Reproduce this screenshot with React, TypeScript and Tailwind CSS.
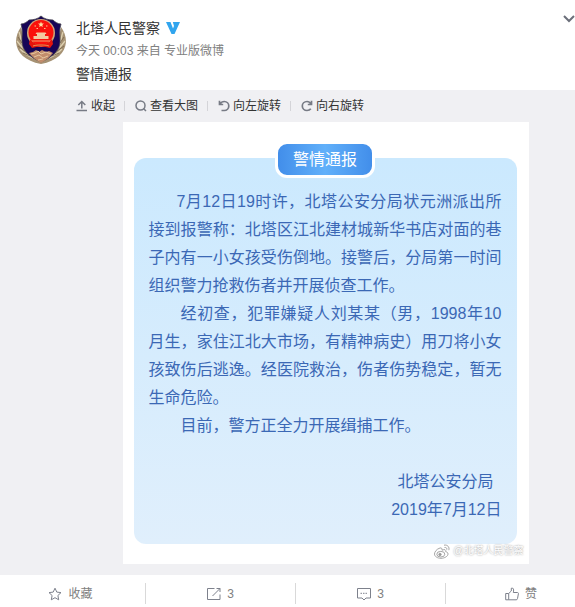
import type { ReactNode } from "react";

function Emblem() {
  return (
    <svg viewBox="0 0 50 50" className="size-[50px] shrink-0" role="img" aria-label="北塔人民警察">
      <path d="M5 12C2 16 0 21 0 27c1 11 9 19 25 22 16-3 24-11 25-22 0-6-2-11-5-15l-4 21-16 10L9 33Z" fill="#a69274" />
      <path d="M3 17c2 5 2 10 4 15M1 26c3 4 6 8 10 11M4 34c4 4 8 7 13 9M47 17c-2 5-2 10-4 15M49 26c-3 4-6 8-10 11M46 34c-4 4-8 7-13 9" fill="none" stroke="#ddd0b0" strokeWidth="1.3" />
      <path d="M2 22l4 6M2 31l7 5M7 38l7 3M48 22l-4 6M48 31l-7 5M43 38l-7 3" fill="none" stroke="#79644a" strokeWidth="0.8" />
      <path d="M25 1c3 3 8 4 12 4 2 2 5 4 8 4-2 6-1 11-1 17 0 9-6 15-19 21C12 41 6 35 6 26c0-6 1-11-1-17 3 0 6-2 8-4 4 0 9-1 12-4Z" fill="#170557" stroke="#3d3a48" strokeWidth="0.8" />
      <path d="M13 38l4-1 3-2 3 2 3-2 4 2 3-1 4 2c-3 4-7 7-12 10-5-3-9-6-12-10Z" fill="#c28d6c" />
      <path d="M15 39l4-1 3-2 3 3 5-2 5 2M18 42l5-2 4 3 5-2M22 45l5-1" fill="none" stroke="#e6c7a0" strokeWidth="1" />
      <circle cx="25" cy="18" r="14" fill="#cfa779" />
      <circle cx="25" cy="17.500" r="12.500" fill="#fa100b" />
      <path d="M14 24c3 4 6 5 11 5s8-1 11-5l1 5-3 4c-6-2-12-2-18 0l-3-4Z" fill="#e5140c" />
      <path d="M17 31c3-1 5-1 8-1s5 0 8 1" fill="none" stroke="#e29355" strokeWidth="1" />
      <path d="m25 6.500 .8 2 2.100.1-1.600 1.400.5 2-1.800-1.100-1.800 1.100.5-2L22.100 8.600l2.100-.1Z" fill="#ffe0a0" />
      <path d="M18.500 11H20M30 11h1.500M20.500 13.500H22M28 13.500h1.500" stroke="#ffc08c" strokeWidth="1.2" />
      <path d="M20.500 17.500h9l1 1.500h-11ZM21 19h8v2h-8ZM17.500 21h15v3h-15Z" fill="#f3c9a0" />
      <path d="M16 26h18" stroke="#efa573" strokeWidth="1" />
    </svg>
  );
}

function Icon({ children }: { children: ReactNode }) {
  return (
    <svg
      viewBox="0 0 12 12"
      className="size-3 shrink-0 text-[#777b85]"
      fill="none"
      stroke="currentColor"
      strokeWidth="1.5"
      aria-hidden="true"
    >
      {children}
    </svg>
  );
}

const tools = [
  { label: "收起", icon: <path d="M.5 10.500h10.500M5.800 8.500V1.500M2.300 5l3.500-3.500L9.300 5" /> },
  {
    label: "查看大图",
    icon: (
      <>
        <circle cx="5.500" cy="5.500" r="4.500" />
        <path d="m8.500 8.500 2.500 2.500" />
      </>
    ),
  },
  {
    label: "向左旋转",
    icon: <path strokeWidth="1.700" d="M1.500.8v3.700h3.700M1.800 4.300C3 2.300 4.500 1.500 6.300 1.500c2.500 0 4.500 2 4.500 4.500s-2 4.500-4.500 4.500H3.500" />,
  },
  {
    label: "向右旋转",
    icon: <path strokeWidth="1.700" d="M10.500.8v3.700H6.800M10.200 4.300C9 2.300 7.700 1.500 6 1.500 3.300 1.500 1.300 3.500 1.300 6s2 4.500 4.700 4.500c1.700 0 3-.7 3.800-1.800" />,
  },
];

const actions = [
  {
    label: "收藏",
    icon: <path d="m7 1.200 1.800 3.900 4.200.5-3.100 2.900.8 4.300L7 10.700l-3.700 2.100.8-4.300L1 5.600l4.200-.5Z" />,
  },
  { label: "3", name: "转发", icon: <path d="M7.500 1.500h-7v11h12.500V7.500M5.500 9 13 1.500M9.500 1.500H13V5" /> },
  {
    label: "3",
    name: "评论",
    icon: (
      <>
        <path d="M.5 1.500h13v9.500H9l-2 2-2-2H.5Z" />
        <path d="M3.500 6.300h7" strokeDasharray="1.500 1" />
      </>
    ),
  },
  {
    label: "赞",
    icon: <path d="M.7 6.500h3v6.300h-3ZM3.700 6.500 6.300 4V1.200h1.500c1 .8 1 2.300.5 4.300h4.200c.8 0 1 .6.900 1.300l-.9 4.800c-.2.800-.6 1.200-1.300 1.200H3.700" />,
  },
];

export default function App() {
  return (
    <main className="overflow-hidden bg-white font-['Liberation_Sans','Noto_Sans_CJK_SC',sans-serif] text-[#333]">
      <header className="flex gap-[10px] pt-[15px] pl-4">
        <Emblem />
        <div className="h-[75px] flex-1 pt-[2px]">
          <div className="flex items-center gap-[6px]">
            <a href="#profile" className="text-sm leading-[22px]">北塔人民警察</a>
            <svg viewBox="0 0 14 12" className="h-3 w-[14px]" role="img" aria-label="认证">
              <path d="M0 0h4.500L7 6.500 8 4 6.800 0H14L8.500 12h-3Z" fill="#31a5ee" />
            </svg>
          </div>
          <p className="text-xs leading-6 text-[#808080]">
            <a href="#time">今天 00:03</a> 来自 <a href="#source">专业版微博</a>
          </p>
          <p className="text-sm leading-[22px]">警情通报</p>
        </div>
        <button type="button" aria-label="更多" className="self-start">
          <svg viewBox="0 0 12 8" className="h-2 w-3" fill="none" stroke="#6b6f7a" strokeWidth="2" aria-hidden="true">
            <path d="m1 1 5 5 5-5" />
          </svg>
        </button>
      </header>

      <section className="bg-[#f0f0f3] pb-[11px] pl-[76px]">
        <div className="flex h-8 items-center">
          {tools.map((tool, i) => (
            <div key={tool.label} className="flex items-center">
              {i > 0 && <span className="mr-[10px] ml-[9px] h-[10px] w-px bg-[#d4d4d8]" />}
              <button type="button" className="flex items-center gap-[3px] text-xs leading-4 whitespace-nowrap">
                <Icon>{tool.icon}</Icon>
                {tool.label}
              </button>
            </div>
          ))}
        </div>

        <article className="relative mx-auto max-w-[406px] bg-white pt-9 pr-3 pb-5 pl-[11px]">
          <div className="rounded-xl bg-linear-to-b from-[#cbe9fe] to-[#e0effc] px-[15px] pb-5 text-base leading-7 text-[#3b68b5]">
            <div className="flex justify-center">
              <h1 className="-mt-[17px] rounded-xl border-3 border-white bg-linear-to-r from-[#428eea] via-[#61b0fa] to-[#428eea] px-[15px] text-base leading-[31px] text-white">
                警情通报
              </h1>
            </div>
            <div className="pt-[10px] text-justify">
              <p className="indent-7">
                7月12日19时许，北塔公安分局状元洲派出所接到报警称：北塔区江北建材城新华书店对面的巷子内有一小女孩受伤倒地。接警后，分局第一时间组织警力抢救伤者并开展侦查工作。
              </p>
              <p className="indent-8">
                经初查，犯罪嫌疑人刘某某（男，1998年10月生，家住江北大市场，有精神病史）用刀将小女孩致伤后逃逸。经医院救治，伤者伤势稳定，暂无生命危险。
              </p>
              <p className="indent-8">目前，警方正全力开展缉捕工作。</p>
            </div>
            <div className="pt-7 text-right">
              <p className="pr-2">北塔公安分局</p>
              <p>2019年7月12日</p>
            </div>
          </div>
          <div className="absolute right-[5px] bottom-[5px] flex items-center gap-[3px]">
            <svg viewBox="0 0 16 15" className="h-[15px] w-4" fill="none" stroke="#a5a5a5" aria-hidden="true">
              <path d="M6 4C2.500 5 .5 8 .5 10c0 2.500 3 4.300 6.500 4.300s7-2 7-4.300c0-1.500-1-2-2.300-2.300.5-2-1-2.700-3.700-1.500C8.300 4.500 7.500 3.600 6 4Z" fill="#fff" />
              <ellipse cx="6.800" cy="10.200" rx="4" ry="2.800" />
              <circle cx="6" cy="10.500" r="1.200" fill="#999" />
              <path d="M10 1.200c3.500-.8 5.800 2 4.800 5M10.500 3.500c1.800-.3 2.700.8 2.300 2.200" />
            </svg>
            <span className="text-[10px] leading-4 text-white text-shadow-[0_0_2px_#888]">@北塔人民警察</span>
          </div>
        </article>
      </section>

      <footer className="-mr-[21px] -ml-1 grid h-8 grid-cols-4 items-start pt-2 pb-[3px]">
        {actions.map((action, i) => (
          <button
            key={i}
            type="button"
            aria-label={action.name ? `${action.name} ${action.label}` : undefined}
            className="flex h-[21px] items-center justify-center gap-[6px] border-r border-[#d9d9d9] text-xs text-[#808080] last:border-r-0"
          >
            <svg viewBox="0 0 14 14" className="size-[14px] shrink-0" fill="none" stroke="#7d818c" aria-hidden="true">
              {action.icon}
            </svg>
            {action.label}
          </button>
        ))}
      </footer>
    </main>
  );
}
